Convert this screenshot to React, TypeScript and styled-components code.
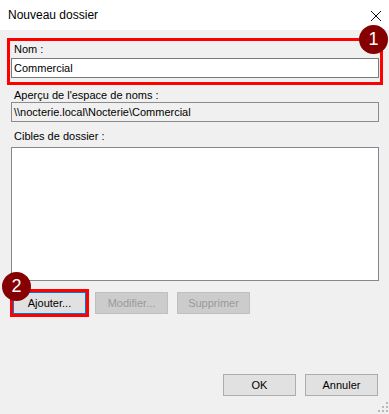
import styled, { createGlobalStyle } from 'styled-components';

const GlobalStyle = createGlobalStyle`
  html, body {
    margin: 0;
    padding: 0;
    background: #f0f0f0;
  }
  * {
    box-sizing: border-box;
  }
`;

const Dialog = styled.div`
  width: 389px;
  height: 414px;
  display: flex;
  flex-direction: column;
  background: #f0f0f0;
  font-family: 'Liberation Sans', Arial, sans-serif;
  font-size: 11px;
  color: #000;
  overflow: hidden;
`;

const TitleBar = styled.div`
  height: 30px;
  flex-shrink: 0;
  background: #fff;
  display: flex;
  align-items: center;
  justify-content: space-between;
  padding: 0 7px 0 8px;
  font-size: 12px;
`;

const CloseButton = styled.div`
  width: 12px;
  height: 12px;
  display: flex;
  margin-top: 1px;
`;

const Body = styled.div`
  position: relative;
  flex: 1;
  display: flex;
  flex-direction: column;
  padding: 8px 6px 0 7px;
`;

const Highlight = styled.div`
  position: relative;
  border: 3px solid #ff0000;
  padding: 2px 1px 4px 1px;
  display: flex;
  flex-direction: column;
`;

const Badge = styled.div<{ $left: number; $top: number }>`
  position: absolute;
  left: ${(p) => p.$left}px;
  top: ${(p) => p.$top}px;
  width: 29px;
  height: 29px;
  border-radius: 50%;
  background: #850000;
  color: #fff;
  font-size: 18px;
  display: flex;
  align-items: center;
  justify-content: center;
  z-index: 2;
`;

const Label = styled.div<{ $inset?: number }>`
  height: 13px;
  line-height: 13px;
  padding-left: ${(p) => p.$inset ?? 7}px;
  white-space: nowrap;
`;

const Field = styled.div<{ $readOnly?: boolean }>`
  height: 20px;
  line-height: 18px;
  padding-left: 2px;
  border: 1px solid ${(p) => (p.$readOnly ? '#8c8c8c' : '#7a7a7a')};
  background: ${(p) => (p.$readOnly ? '#f0f0f0' : '#fff')};
  white-space: nowrap;
`;

const Section = styled.div<{ $top: number }>`
  display: flex;
  flex-direction: column;
  margin: ${(p) => p.$top}px 4px 0 4px;
  gap: 0;
`;

const ListBox = styled.div`
  height: 134px;
  margin-top: 4px;
  border: 1px solid #828790;
  background: #fff;
`;

const ButtonRow = styled.div<{ $end?: boolean; $top: number }>`
  position: relative;
  display: flex;
  gap: 9px;
  margin-top: ${(p) => p.$top}px;
  padding: ${(p) => (p.$end ? '0 5px 0 0' : '0 0 0 6px')};
  justify-content: ${(p) => (p.$end ? 'flex-end' : 'flex-start')};
`;

const Button = styled.button<{ $focused?: boolean }>`
  width: 73px;
  height: 22px;
  padding: 0;
  font-family: inherit;
  font-size: 11px;
  color: #000;
  background: #e1e1e1;
  border: 1px solid ${(p) => (p.$focused ? '#0078d7' : '#adadad')};
  outline: ${(p) => (p.$focused ? '3px solid #ff0000' : 'none')};
  &:disabled {
    background: #cccccc;
    border-color: #bfbfbf;
    color: #9a9a9a;
  }
`;

const Grip = styled.div`
  position: absolute;
  right: 1px;
  bottom: 2px;
  width: 10px;
  height: 10px;
  display: flex;
`;

export default function App() {
  return (
    <>
      <GlobalStyle />
      <Dialog>
        <TitleBar>
          <span>Nouveau dossier</span>
          <CloseButton>
            <svg width="12" height="12" viewBox="0 0 12 12">
              <path d="M1 1 L11 11 M11 1 L1 11" stroke="#111" strokeWidth="1" fill="none" />
            </svg>
          </CloseButton>
        </TitleBar>
        <Body>
          <Highlight>
            <Badge $left={349} $top={-16}>1</Badge>
            <Label $inset={3}>Nom :</Label>
            <Field style={{ marginTop: 2 }}>Commercial</Field>
          </Highlight>

          <Section $top={4}>
            <Label $inset={3}>Aperçu de l'espace de noms :</Label>
            <Field $readOnly>\\nocterie.local\Nocterie\Commercial</Field>
          </Section>

          <Section $top={8}>
            <Label $inset={3}>Cibles de dossier :</Label>
            <ListBox />
          </Section>

          <ButtonRow $top={11}>
            <Badge $left={-5} $top={-20}>2</Badge>
            <Button $focused>Ajouter...</Button>
            <Button disabled>Modifier...</Button>
            <Button disabled>Supprimer</Button>
          </ButtonRow>

          <ButtonRow $end $top={60}>
            <Button>OK</Button>
            <Button>Annuler</Button>
          </ButtonRow>

          <Grip>
            <svg width="10" height="10" viewBox="0 0 10 10">
              <rect x="8" y="0" width="2" height="2" fill="#b8b8b8" />
              <rect x="8" y="4" width="2" height="2" fill="#b8b8b8" />
              <rect x="4" y="4" width="2" height="2" fill="#b8b8b8" />
              <rect x="8" y="8" width="2" height="2" fill="#b8b8b8" />
              <rect x="4" y="8" width="2" height="2" fill="#b8b8b8" />
              <rect x="0" y="8" width="2" height="2" fill="#b8b8b8" />
            </svg>
          </Grip>
        </Body>
      </Dialog>
    </>
  );
}
